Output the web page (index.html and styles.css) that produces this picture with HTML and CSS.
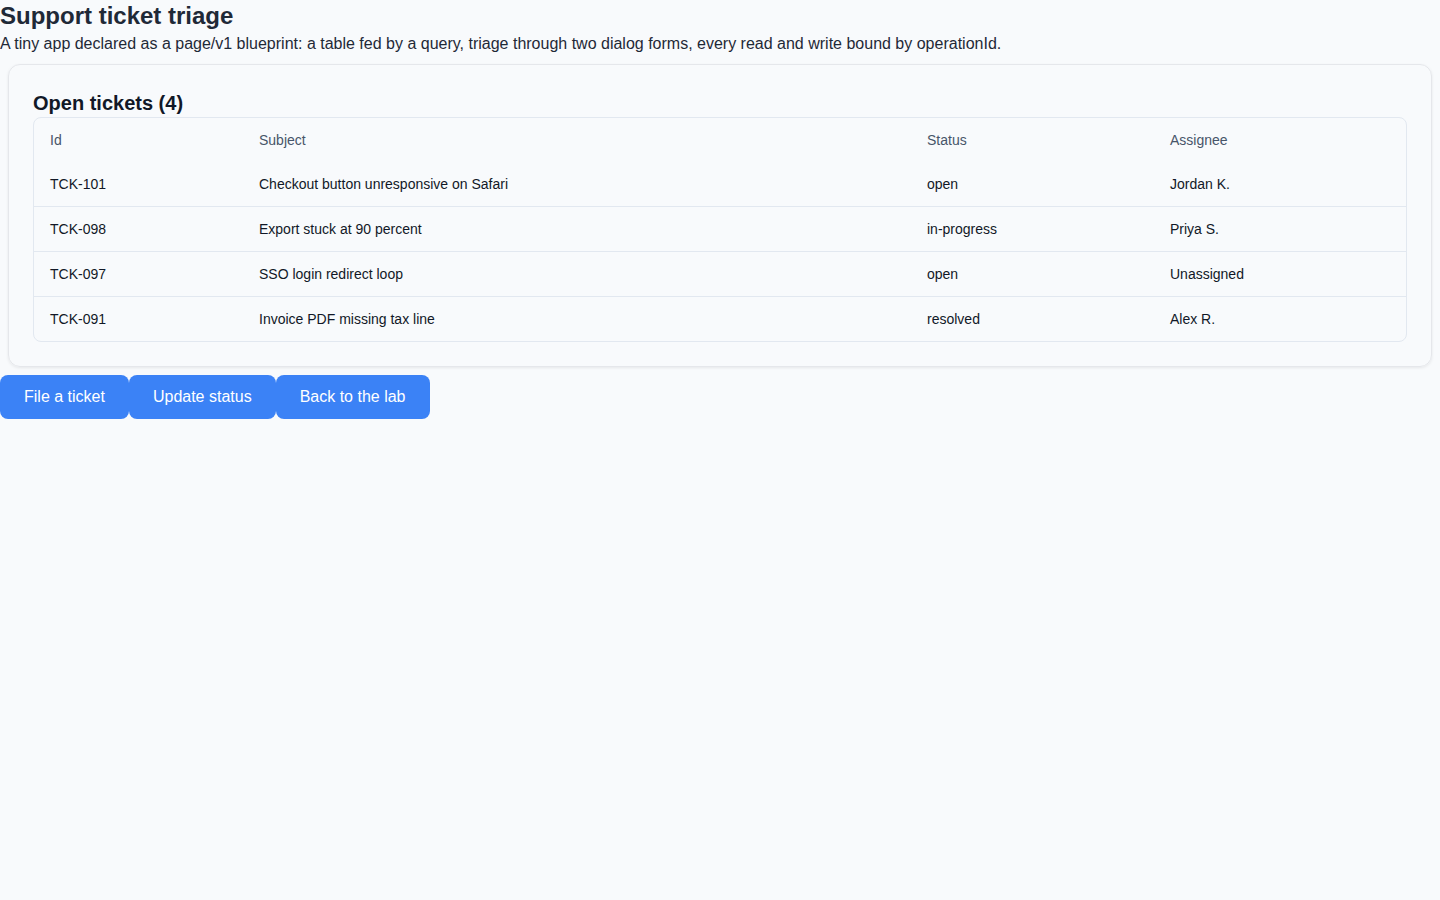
FILE: index.html
```html
<!DOCTYPE html>
<html lang="en">
<head>
    <meta charset="UTF-8">
    <meta name="viewport" content="width=device-width, initial-scale=1.0">
    <title>Support ticket triage</title>
    <link rel="stylesheet" href="styles.css">
</head>
<body>
    <h1 class="page-title">Support ticket triage</h1>
    <p class="page-intro">A tiny app declared as a page/v1 blueprint: a table fed by a query, triage through two dialog forms, every read and write bound by operationId.</p>

    <div class="card">
        <h2 class="card-title">Open tickets (4)</h2>
        <div class="table-wrap">
            <table class="tickets">
                <thead>
                    <tr>
                        <th class="col-id">Id</th>
                        <th class="col-subject">Subject</th>
                        <th class="col-status">Status</th>
                        <th>Assignee</th>
                    </tr>
                </thead>
                <tbody>
                    <tr>
                        <td>TCK-101</td>
                        <td>Checkout button unresponsive on Safari</td>
                        <td>open</td>
                        <td>Jordan K.</td>
                    </tr>
                    <tr>
                        <td>TCK-098</td>
                        <td>Export stuck at 90 percent</td>
                        <td>in-progress</td>
                        <td>Priya S.</td>
                    </tr>
                    <tr>
                        <td>TCK-097</td>
                        <td>SSO login redirect loop</td>
                        <td>open</td>
                        <td>Unassigned</td>
                    </tr>
                    <tr>
                        <td>TCK-091</td>
                        <td>Invoice PDF missing tax line</td>
                        <td>resolved</td>
                        <td>Alex R.</td>
                    </tr>
                </tbody>
            </table>
        </div>
    </div>

    <div class="actions">
        <button class="btn">File a ticket</button>
        <button class="btn">Update status</button>
        <button class="btn">Back to the lab</button>
    </div>
</body>
</html>
```

FILE: styles.css
```css
* {
    margin: 0;
    padding: 0;
    box-sizing: border-box;
}

body {
    background: #f8fafc;
    color: #1f2937;
    font-family: 'Liberation Sans', Arial, sans-serif;
    min-height: 100vh;
}

.page-title {
    font-size: 24px;
    font-weight: 700;
    line-height: 32px;
}

.page-intro {
    font-size: 16px;
    line-height: 24px;
    margin-bottom: 8px;
}

.card {
    margin: 0 8px;
    padding: 24px;
    border: 1px solid #e5e7eb;
    border-radius: 12px;
    box-shadow: 0 1px 3px rgba(0, 0, 0, 0.08);
}

.card-title {
    font-size: 20px;
    font-weight: 700;
    line-height: 28px;
    color: #111827;
}

.table-wrap {
    border: 1px solid #e2e8f0;
    border-radius: 8px;
    overflow: hidden;
}

.tickets {
    width: 100%;
    border-collapse: collapse;
    font-size: 14px;
}

.tickets th,
.tickets td {
    text-align: left;
    padding: 12px 16px;
    line-height: 20px;
}

.tickets th {
    font-weight: 400;
    color: #475569;
}

.tickets td {
    color: #111827;
}

.tickets tbody tr + tr td {
    border-top: 1px solid #e2e8f0;
}

.col-id { width: 209px; }
.col-subject { width: 668px; }
.col-status { width: 243px; }

.actions {
    display: flex;
    margin-top: 8px;
}

.btn {
    background: #3b82f6;
    color: white;
    border: none;
    border-radius: 8px;
    padding: 12px 24px;
    font-family: inherit;
    font-size: 16px;
    line-height: 20px;
    cursor: pointer;
}
```
